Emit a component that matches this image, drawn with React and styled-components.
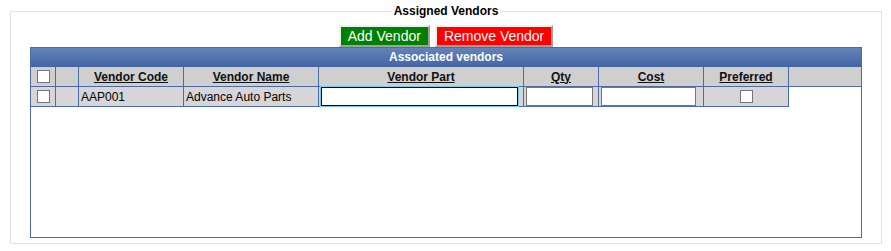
import React from 'react'
import styled, { createGlobalStyle } from 'styled-components'

const GlobalStyle = createGlobalStyle`
    html, body {
        margin: 0;
        padding: 0;
        background: #fff;
        font-family: "Liberation Sans", Arial, sans-serif;
    }
`

const columns = [
    { key: 'check', width: 25 },
    { key: 'blank', width: 23 },
    { key: 'code', width: 105, label: 'Vendor Code' },
    { key: 'name', width: 135, label: 'Vendor Name' },
    { key: 'part', width: 205, label: 'Vendor Part' },
    { key: 'qty', width: 75, label: 'Qty' },
    { key: 'cost', width: 105, label: 'Cost' },
    { key: 'preferred', width: 85, label: 'Preferred' },
]

const vendors = [
    { code: 'AAP001', name: 'Advance Auto Parts', part: '', qty: '', cost: '', preferred: false },
]

export default function App () {
    return (
        <>
        <GlobalStyle />
        <Fieldset>
            <Legend>Assigned Vendors</Legend>
            <ButtonBar>
                <ActionButton $color="#008000">Add Vendor</ActionButton>
                <ActionButton $color="#ff0000">Remove Vendor</ActionButton>
            </ButtonBar>
            <Panel>
                <TitleBar>Associated vendors</TitleBar>
                <Grid $cols={columns.map(c => `${c.width}px`).join(' ') + ' 1fr'}>
                    <HeaderCell><Check type="checkbox" /></HeaderCell>
                    <HeaderCell />
                    {columns.slice(2).map(c => (
                        <HeaderCell key={c.key}><HeaderLink>{c.label}</HeaderLink></HeaderCell>
                    ))}
                    <HeaderCell $last />
                    {vendors.map(v => (
                        <React.Fragment key={v.code}>
                            <DataCell $center><Check type="checkbox" /></DataCell>
                            <DataCell />
                            <DataCell>{v.code}</DataCell>
                            <DataCell>{v.name}</DataCell>
                            <DataCell><TextInput $width={197} $focused defaultValue={v.part} /></DataCell>
                            <DataCell><TextInput $width={67} defaultValue={v.qty} /></DataCell>
                            <DataCell><TextInput $width={95} defaultValue={v.cost} /></DataCell>
                            <DataCell $center><Check type="checkbox" defaultChecked={v.preferred} /></DataCell>
                            <EmptyCell />
                        </React.Fragment>
                    ))}
                </Grid>
            </Panel>
        </Fieldset>
        </>
    )
}

const Fieldset = styled.fieldset`
    box-sizing: border-box;
    width: 872px;
    height: 240px;
    margin: 4px 9px 0 10px;
    padding: 7px 19px 6px 19px;
    border: 1px solid #e3e3e3;
    min-width: 0;
`

const Legend = styled.legend`
    margin: 0 auto;
    padding: 0 2px;
    font-size: 12px;
    line-height: 14px;
    font-weight: bold;
    color: #000;
`

const ButtonBar = styled.div`
    display: flex;
    justify-content: center;
    gap: 5px;
`

const ActionButton = styled.button`
    box-sizing: border-box;
    height: 22px;
    padding: 0 7px;
    font-family: "Liberation Sans", Arial, sans-serif;
    font-size: 14px;
    line-height: 18px;
    color: #fff;
    background: ${p => p.$color};
    border: 2px solid;
    border-color: #f0f0f0 #a0a0a0 #a0a0a0 #f0f0f0;
    border-radius: 0;
    cursor: pointer;
`

const Panel = styled.div`
    box-sizing: border-box;
    width: 832px;
    height: 191px;
    border: 1px solid #4a6ca8;
    background: #fff;
`

const TitleBar = styled.div`
    height: 19px;
    line-height: 18px;
    text-align: center;
    font-size: 12px;
    font-weight: bold;
    color: #fff;
    background: linear-gradient(#6383ba, #4465a4);
`

const Grid = styled.div`
    display: grid;
    grid-template-columns: ${p => p.$cols};
    grid-auto-rows: 20px;
`

const HeaderCell = styled.div`
    box-sizing: border-box;
    display: flex;
    align-items: center;
    justify-content: center;
    background: #cfcfcf;
    border-right: ${p => p.$last ? 'none' : '1px solid #4a6ca8'};
    border-bottom: 1px solid #4a6ca8;
    font-size: 12px;
    font-weight: bold;
    color: #111;
`

const HeaderLink = styled.span`
    text-decoration: underline;
    cursor: pointer;
`

const DataCell = styled.div`
    box-sizing: border-box;
    display: flex;
    align-items: center;
    justify-content: ${p => p.$center ? 'center' : 'flex-start'};
    padding: 0 2px;
    background: #d7d5d8;
    border-right: 1px solid #4a6ca8;
    border-bottom: 1px solid #4a6ca8;
    font-size: 12px;
    color: #000;
    white-space: nowrap;
`

const EmptyCell = styled.div`
    background: #fff;
`

const TextInput = styled.input`
    box-sizing: border-box;
    width: ${p => p.$width}px;
    height: 19px;
    margin: 0;
    padding: 1px 2px;
    font-family: "Liberation Sans", Arial, sans-serif;
    font-size: 12px;
    background: #fff;
    border: 1px solid ${p => p.$focused ? '#000' : '#767676'};
    box-shadow: ${p => p.$focused ? '0 0 0 1px #6ad0ee' : 'none'};
    outline: none;
`

const Check = styled.input`
    appearance: none;
    box-sizing: border-box;
    width: 13px;
    height: 13px;
    margin: 0;
    background: #fff;
    border: 1px solid #767676;
`
